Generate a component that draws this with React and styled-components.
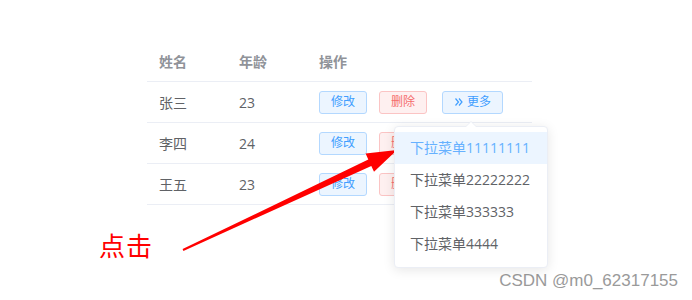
import React from "react";
import styled, { createGlobalStyle } from "styled-components";

const Global = createGlobalStyle`
  html, body { margin: 0; padding: 0; background: #fff; }
  body { font-family: "Open Sans", "Noto Sans CJK SC", sans-serif; }
  #root { width: 692px; height: 300px; position: relative; overflow: hidden; }
`;

const Page = styled.div`
  position: relative;
  width: 692px;
  height: 300px;
  padding: 41px 0 0 99px;
  box-sizing: border-box;
`;

const Table = styled.div`
  margin-left: 48px;
  width: 385px;
  display: flex;
  flex-direction: column;
  font-size: 14px;
  color: #606266;
`;

const Row = styled.div`
  display: grid;
  grid-template-columns: 80px 80px 1fr;
  height: 40px;
  align-items: center;
  border-bottom: 1px solid #ebeef5;
  color: ${(p) => (p.$head ? "#909399" : "#606266")};
  font-weight: ${(p) => (p.$head ? "bold" : "normal")};
`;

const Cell = styled.div`
  padding-left: 12px;
  display: flex;
  align-items: center;
  gap: 12px;
`;

const Btn = styled.button`
  position: relative;
  height: 23px;
  box-sizing: border-box;
  padding: 0 11px;
  font-family: inherit;
  font-size: 12px;
  border-radius: 3px;
  border: 1px solid ${(p) => (p.$danger ? "#fbc4c4" : "#b3d8ff")};
  background: ${(p) => (p.$danger ? "#fef0f0" : "#ecf5ff")};
  color: ${(p) => (p.$danger ? "#f56c6c" : "#409eff")};
  display: inline-flex;
  align-items: center;
  gap: 3px;
  line-height: 1;
  margin-left: ${(p) => (p.$gapLeft ? "3px" : "0")};
`;

const MoreWrap = styled.div`
  position: relative;
  display: inline-flex;
`;

const Menu = styled.ul`
  position: absolute;
  top: 35px;
  left: 50%;
  transform: translateX(-50%);
  width: 154px;
  box-sizing: border-box;
  margin: 0;
  padding: 5px 0 7px;
  list-style: none;
  background: #fff;
  border: 1px solid #ebeef5;
  border-radius: 4px;
  box-shadow: 0 2px 12px 0 rgba(0, 0, 0, 0.1);
  z-index: 10;
  font-weight: normal;
`;

const Caret = styled.span`
  position: absolute;
  top: -6px;
  left: 50%;
  margin-left: -6px;
  width: 0;
  height: 0;
  border: 6px solid transparent;
  border-top-width: 0;
  border-bottom-color: #ebeef5;
  &::after {
    content: "";
    position: absolute;
    left: -6px;
    top: 1px;
    border: 6px solid transparent;
    border-top-width: 0;
    border-bottom-color: #fff;
  }
`;

const Item = styled.li`
  height: 32px;
  line-height: 32px;
  padding: 0 6px 0 15px;
  font-size: 14px;
  white-space: nowrap;
  color: ${(p) => (p.$active ? "#66b1ff" : "#606266")};
  background: ${(p) => (p.$active ? "#ecf5ff" : "transparent")};
`;

const Note = styled.div`
  margin-top: 24px;
  font-size: 26px;
  line-height: 32px;
  color: #ff0000;
  font-family: "Noto Sans CJK SC", sans-serif;
  letter-spacing: 1px;
`;

const ArrowLayer = styled.svg`
  position: absolute;
  left: 0;
  top: 0;
  z-index: 5;
  pointer-events: none;
`;

const Watermark = styled.div`
  position: absolute;
  right: 14px;
  bottom: 9px;
  font-size: 17px;
  color: #9a9a9a;
  font-family: "Liberation Sans", sans-serif;
`;

const DArrow = () => (
  <svg width="10" height="10" viewBox="0 0 10 10" fill="none" stroke="#409eff" strokeWidth="1.2">
    <path d="M1.5 1.5 L4.5 5 L1.5 8.5" />
    <path d="M5 1.5 L8 5 L5 8.5" />
  </svg>
);

const rows = [
  { name: "张三", age: 23 },
  { name: "李四", age: 24 },
  { name: "王五", age: 23 },
];

const items = ["下拉菜单11111111", "下拉菜单22222222", "下拉菜单333333", "下拉菜单4444"];

export default function App() {
  return (
    <>
      <Global />
      <Page>
        <Table>
          <Row $head>
            <Cell>姓名</Cell>
            <Cell>年龄</Cell>
            <Cell>操作</Cell>
          </Row>
          {rows.map((r, i) => (
            <Row key={i}>
              <Cell>{r.name}</Cell>
              <Cell>{r.age}</Cell>
              <Cell>
                <Btn>修改</Btn>
                <Btn $danger>删除</Btn>
                {i === 0 && (
                  <MoreWrap>
                    <Btn $gapLeft>
                      <DArrow />
                      更多
                    </Btn>
                    <Menu>
                      <Caret />
                      {items.map((t, k) => (
                        <Item key={k} $active={k === 0}>
                          {t}
                        </Item>
                      ))}
                    </Menu>
                  </MoreWrap>
                )}
              </Cell>
            </Row>
          ))}
        </Table>
        <Note>点击</Note>
        <ArrowLayer width="692" height="300" viewBox="0 0 692 300">
          <polygon
            points="182.6,249.1 368.3,159.5 365.6,153.6 397,150 374,171.8 371.3,165.9 183.4,250.9"
            fill="#ff0000"
          />
        </ArrowLayer>
        <Watermark>CSDN @m0_62317155</Watermark>
      </Page>
    </>
  );
}
